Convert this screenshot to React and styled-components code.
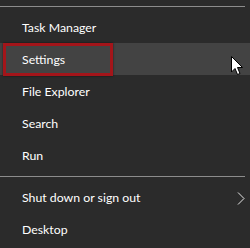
import React from "react";
import styled, { createGlobalStyle, css } from "styled-components";

const Global = createGlobalStyle`
  html, body { margin: 0; padding: 0; background: #2b2b2b; }
`;

const Menu = styled.div`
  position: relative;
  width: 250px;
  height: 248px;
  background: #2b2b2b;
  padding-top: 6px;
  box-sizing: border-box;
  display: flex;
  flex-direction: column;
  font-family: Lato, "Noto Sans", sans-serif;
  font-size: 12.3px;
  color: #ffffff;
  overflow: hidden;
`;

const Separator = styled.div`
  height: 1px;
  margin: 0 5px 4px 0;
  background: #8c8c8c;
  ${(props) =>
    props.middle &&
    css`
      margin-top: 5px;
    `}
`;

const Item = styled.div`
  height: 32px;
  display: flex;
  align-items: center;
  justify-content: space-between;
  padding: 0 5px 0 22px;
  ${(props) =>
    props.active &&
    css`
      background: #434343;
    `}
`;

const Label = styled.span`
  line-height: 1;
  padding-top: 3px;
`;

const Chevron = styled.svg`
  width: 8px;
  height: 13px;
  margin-top: 2px;
`;

const Annotation = styled.div`
  position: absolute;
  left: 3px;
  top: 43px;
  width: 110px;
  height: 33px;
  box-sizing: border-box;
  border: 3px solid #a3151a;
  box-shadow: 0 0 2px rgba(0, 0, 0, 0.6);
`;

const Cursor = styled.svg`
  position: absolute;
  left: 231px;
  top: 56px;
  width: 13px;
  height: 20px;
`;

export default function App() {
  const top = ["Task Manager", "Settings", "File Explorer", "Search", "Run"];
  return (
    <>
      <Global />
      <Menu>
        <Separator />
        {top.map((t) => (
          <Item key={t} active={t === "Settings"}>
            <Label>{t}</Label>
          </Item>
        ))}
        <Separator middle />
        <Item>
          <Label>Shut down or sign out</Label>
          <Chevron viewBox="0 0 8 13">
            <polyline
              points="1,0.5 7,6.5 1,12.5"
              fill="none"
              stroke="#e6e6e6"
              strokeWidth="1"
            />
          </Chevron>
        </Item>
        <Item>
          <Label>Desktop</Label>
        </Item>
        <Annotation />
        <Cursor viewBox="0 0 13 20">
          <path
            d="M0.5,0.5 L0.5,16 L4,12.5 L6.5,18.5 L9,17.5 L6.5,11.5 L11.5,11.5 Z"
            fill="#ffffff"
            stroke="#000000"
            strokeWidth="1"
          />
        </Cursor>
      </Menu>
    </>
  );
}
